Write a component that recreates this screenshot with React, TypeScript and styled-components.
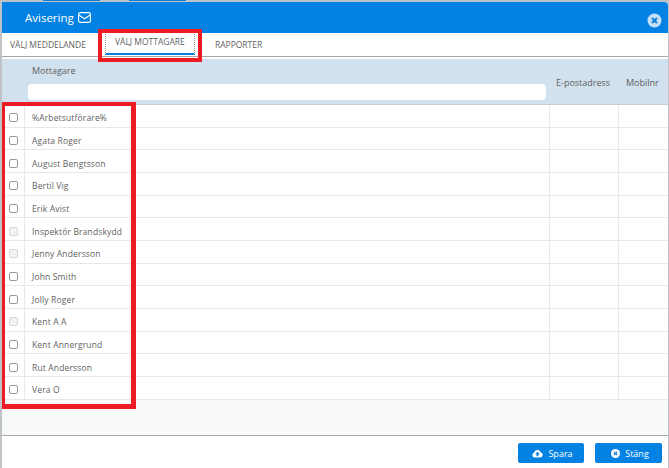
import React from 'react';
import styled, { createGlobalStyle } from 'styled-components';

const recipients = [
    { name: '%Arbetsutförare%' },
    { name: 'Agata Roger' },
    { name: 'August Bengtsson' },
    { name: 'Bertil Vig' },
    { name: 'Erik Avist' },
    { name: 'Inspektör Brandskydd', disabled: true },
    { name: 'Jenny Andersson', disabled: true },
    { name: 'John Smith' },
    { name: 'Jolly Roger' },
    { name: 'Kent A A', disabled: true },
    { name: 'Kent Annergrund' },
    { name: 'Rut Andersson' },
    { name: 'Vera O' },
];

const App: React.FC = () => (
    <>
        <GlobalStyle />
        <Page>
            <TopStrip>
                <StripTab />
                <StripTab />
            </TopStrip>
            <Modal>
                <Header>
                    <Title>
                        Avisering
                        <svg width="13" height="11" viewBox="0 0 13 11" fill="none" stroke="#fff" strokeWidth="1.1">
                            <rect x="0.6" y="0.6" width="11.8" height="9.8" rx="1.5" />
                            <path d="M0.8 3 6.5 6.8 12.2 3" />
                        </svg>
                    </Title>
                    <CloseIcon width="15" height="15" viewBox="0 0 15 15">
                        <circle cx="7.5" cy="7.5" r="7" fill="#c4e0f8" />
                        <path d="M5 5 10 10M10 5 5 10" stroke="#0f7fdc" strokeWidth="2" />
                    </CloseIcon>
                </Header>
                <Tabs>
                    <Tab>VÄLJ MEDDELANDE</Tab>
                    <ActiveTab>VÄLJ MOTTAGARE</ActiveTab>
                    <Tab>RAPPORTER</Tab>
                </Tabs>
                <TableHead>
                    <NameHead>
                        <HeadLabel>Mottagare</HeadLabel>
                        <SearchInput />
                    </NameHead>
                    <MailHead>E-postadress</MailHead>
                    <PhoneHead>Mobilnr</PhoneHead>
                </TableHead>
                <TableBody>
                    {recipients.map((r) => (
                        <Row key={r.name}>
                            <CheckCell>
                                <Check $disabled={r.disabled} />
                            </CheckCell>
                            <NameCell>{r.name}</NameCell>
                            <MailCell />
                            <PhoneCell />
                        </Row>
                    ))}
                </TableBody>
                <Footer>
                    <ActionButton>
                        <svg width="11" height="9" viewBox="0 0 14 11">
                            <path fill="#fff" d="M3.4 10.6A3 3 0 0 1 2.6 4.7 4.4 4.4 0 0 1 11 3.9 3.4 3.4 0 0 1 10.6 10.6Z" />
                            <path fill="#0f7fdc" d="M7 3.4 10 6.6H8.2V9H5.8V6.6H4Z" />
                        </svg>
                        Spara
                    </ActionButton>
                    <CloseButton>
                        <svg width="9" height="9" viewBox="0 0 10 10">
                            <circle cx="5" cy="5" r="5" fill="#fff" />
                            <path d="M3.2 3.2 6.8 6.8M6.8 3.2 3.2 6.8" stroke="#0f7fdc" strokeWidth="1.5" />
                        </svg>
                        Stäng
                    </CloseButton>
                </Footer>
            </Modal>
            <TabMark />
            <ListMark />
        </Page>
    </>
);

export default App;

const GlobalStyle = createGlobalStyle`
    html, body {
        margin: 0;
        padding: 0;
    }
    body {
        width: 669px;
        height: 468px;
        overflow: hidden;
        background: #bfc3c7;
        font-family: 'Open Sans', 'Liberation Sans', sans-serif;
        color: #5f5f5f;
    }
`;

const Page = styled.div`
    position: relative;
    width: 669px;
    height: 468px;
`;

const TopStrip = styled.div`
    display: flex;
    gap: 29px;
    height: 2px;
    padding-left: 43px;
`;

const StripTab = styled.div`
    width: 57px;
    height: 1px;
    background: #0f7fdc;
`;

const Modal = styled.div`
    display: flex;
    flex-direction: column;
    width: 666px;
    height: 466px;
    margin-left: 2px;
    background: #fff;
    border-top-right-radius: 4px;
    overflow: hidden;
`;

const Header = styled.div`
    display: flex;
    align-items: center;
    justify-content: space-between;
    height: 31px;
    padding: 0 6px 0 23px;
    background: #0382e3;
    flex: none;
`;

const Title = styled.div`
    display: flex;
    align-items: center;
    gap: 4px;
    font-size: 11.5px;
    color: #fff;
`;

const CloseIcon = styled.svg`
    margin-top: 6px;
`;

const Tabs = styled.div`
    display: flex;
    height: 24px;
    box-sizing: border-box;
    flex: none;
    border-bottom: 1px solid #a8a8a8;
`;

const Tab = styled.div`
    display: flex;
    align-items: center;
    height: 22px;
    margin-left: 12px;
    padding: 0 8px;
    font-size: 8.5px;
    &:first-child {
        margin-left: 0;
    }
`;

const ActiveTab = styled.div`
    display: flex;
    align-items: center;
    justify-content: center;
    width: 90px;
    height: 21px;
    margin: 1px 0 0 11px;
    padding-bottom: 5px;
    box-sizing: border-box;
    font-size: 8.5px;
    border-left: 1px dotted #999;
    border-right: 1px dotted #999;
    border-bottom: 2px solid #0382e3;
`;

const TableHead = styled.div`
    display: flex;
    height: 46px;
    box-sizing: border-box;
    margin-top: 2px;
    background: #d2e1ee;
    border-bottom: 1px solid #c4ced6;
    flex: none;
`;

const NameHead = styled.div`
    width: 548px;
    padding: 5px 0 0 26px;
    box-sizing: border-box;
`;

const HeadLabel = styled.div`
    padding-left: 4px;
    font-size: 9px;
    line-height: 13px;
`;

const SearchInput = styled.div`
    width: 518px;
    height: 16px;
    margin-top: 7px;
    background: #fff;
    border-radius: 4px;
`;

const MailHead = styled.div`
    width: 69px;
    padding: 17px 0 0 6px;
    box-sizing: border-box;
    font-size: 9px;
    line-height: 13px;
    white-space: nowrap;
`;

const PhoneHead = styled.div`
    flex: 1;
    padding: 17px 0 0 7px;
    font-size: 9px;
    line-height: 13px;
`;

const TableBody = styled.div`
    flex: 1;
    background: #f8f9f9;
`;

const Row = styled.div`
    display: grid;
    grid-template-columns: 22px 525px 69px 1fr;
    height: 22.67px;
    box-sizing: border-box;
    background: #fff;
    border-bottom: 1px solid #e6e8e9;
`;

const CheckCell = styled.div`
    display: flex;
    align-items: center;
    justify-content: center;
    padding: 4px 0 0 1px;
`;

const Check = styled.div<{ $disabled?: boolean }>`
    width: 7px;
    height: 7px;
    background: ${(p) => (p.$disabled ? '#f2f2f2' : '#fff')};
    border: 1px solid ${(p) => (p.$disabled ? '#d8d8d8' : '#999')};
    border-radius: 2px;
`;

const NameCell = styled.div`
    display: flex;
    align-items: center;
    padding: 4px 0 0 7px;
    font-size: 8.5px;
    letter-spacing: 0.15px;
    border-left: 1px solid #e6e8e9;
`;

const MailCell = styled.div`
    border-left: 1px solid #e6e8e9;
`;

const PhoneCell = styled.div`
    border-left: 1px solid #e6e8e9;
`;

const Footer = styled.div`
    display: flex;
    justify-content: flex-end;
    gap: 11px;
    height: 33px;
    padding: 7px 6px 0 0;
    box-sizing: border-box;
    background: #fff;
    border-top: 1px solid #a8a8a8;
    flex: none;
`;

const ActionButton = styled.div`
    display: flex;
    align-items: center;
    justify-content: center;
    gap: 5px;
    width: 66px;
    height: 20px;
    padding-left: 3px;
    box-sizing: border-box;
    background: #0382e3;
    border-radius: 2px;
    color: #fff;
    font-size: 9px;
`;

const CloseButton = styled(ActionButton)`
    width: 67px;
`;

const TabMark = styled.div`
    position: absolute;
    left: 98px;
    top: 29px;
    width: 104px;
    height: 33px;
    box-sizing: border-box;
    border: 4px solid #ed1c24;
`;

const ListMark = styled.div`
    position: absolute;
    left: 2px;
    top: 102px;
    width: 134px;
    height: 307px;
    box-sizing: border-box;
    border-style: solid;
    border-color: #ed1c24;
    border-width: 4px 5px 5px 3px;
`;
